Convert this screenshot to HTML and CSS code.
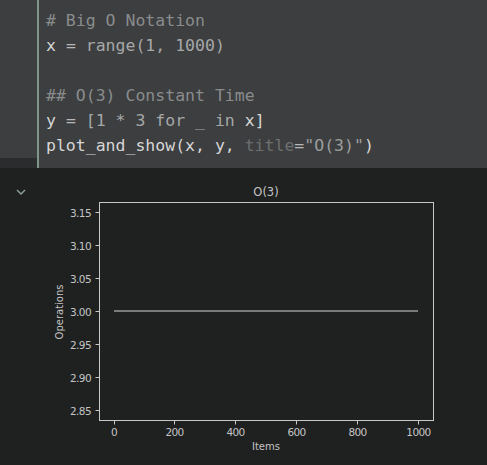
FILE: index.html
```html
<!DOCTYPE html>
<html>
<head>
<meta charset="utf-8">
<link rel="stylesheet" href="styles.css">
</head>
<body>
<div class="cell">
  <div class="gutter"><div class="gutter-top"></div></div>
  <pre class="code"><span class="cm"># Big O Notation</span>
<span class="id">x</span> <span class="op">=</span> <span class="kw">range(1, 1000)</span>

<span class="cm">## O(3) Constant Time</span>
<span class="id">y</span> <span class="op">=</span> <span class="kw">[1 * 3 for _ in</span> <span class="id">x]</span>
<span class="id">plot_and_show(x, y,</span> <span class="pm">title</span><span class="op">=</span><span class="st">"O(3)"</span><span class="id">)</span></pre>
</div>
<div class="output">
  <div class="toggle">
    <svg width="10" height="6" viewBox="0 0 10 6"><path d="M1 1 L5 5 L9 1" fill="none" stroke="#8fa39a" stroke-width="1.4"/></svg>
  </div>
  <svg class="plot" width="447" height="297" viewBox="0 0 447 297">
    <g transform="translate(-40,-168)" font-family="DejaVu Sans, sans-serif" font-size="10" fill="#c4c4c4">
      <text x="266" y="196" text-anchor="middle" font-size="11.5">O(3)</text>
      <rect x="99.5" y="202.5" width="334" height="218" fill="none" stroke="#c8c8c8" stroke-width="1"/>
      <line x1="114" y1="311" x2="418" y2="311" stroke="#777b7b" stroke-width="2"/>
      <g stroke="#c8c8c8" stroke-width="1">
        <line x1="95.5" y1="212.5" x2="99.5" y2="212.5"/>
        <line x1="95.5" y1="245.5" x2="99.5" y2="245.5"/>
        <line x1="95.5" y1="278.5" x2="99.5" y2="278.5"/>
        <line x1="95.5" y1="311.5" x2="99.5" y2="311.5"/>
        <line x1="95.5" y1="344.5" x2="99.5" y2="344.5"/>
        <line x1="95.5" y1="377.5" x2="99.5" y2="377.5"/>
        <line x1="95.5" y1="410.5" x2="99.5" y2="410.5"/>
        <line x1="114.5" y1="420.5" x2="114.5" y2="424.5"/>
        <line x1="174.5" y1="420.5" x2="174.5" y2="424.5"/>
        <line x1="235.5" y1="420.5" x2="235.5" y2="424.5"/>
        <line x1="296.5" y1="420.5" x2="296.5" y2="424.5"/>
        <line x1="357.5" y1="420.5" x2="357.5" y2="424.5"/>
        <line x1="418.5" y1="420.5" x2="418.5" y2="424.5"/>
      </g>
      <g text-anchor="end" letter-spacing="-0.6" font-size="10.5">
        <text x="91" y="216.5">3.15</text>
        <text x="91" y="249.5">3.10</text>
        <text x="91" y="282.5">3.05</text>
        <text x="91" y="315.5">3.00</text>
        <text x="91" y="348.5">2.95</text>
        <text x="91" y="381.5">2.90</text>
        <text x="91" y="414.5">2.85</text>
      </g>
      <g text-anchor="middle" letter-spacing="-0.6" font-size="10.5">
        <text x="114" y="436">0</text>
        <text x="174.5" y="436">200</text>
        <text x="235.5" y="436">400</text>
        <text x="296.5" y="436">600</text>
        <text x="357.5" y="436">800</text>
        <text x="418.5" y="436">1000</text>
      </g>
      <text x="266" y="450" text-anchor="middle">Items</text>
      <text x="0" y="0" text-anchor="middle" transform="translate(63,312) rotate(-90)">Operations</text>
    </g>
  </svg>
</div>
</body>
</html>
```
FILE: styles.css
```css
html, body {
  margin: 0;
  padding: 0;
  background: #1f2121;
  width: 487px;
  height: 465px;
  overflow: hidden;
}
.cell {
  display: flex;
  height: 168px;
  background: #2b2c2d;
}
.gutter {
  width: 37px;
  flex: none;
}
.gutter-top {
  height: 158px;
  background: #3c3e40;
}
.code {
  flex: 1;
  margin: 0;
  background: #3c3e40;
  border-left: 2px solid #7f978a;
  padding: 8px 0 0 7px;
  font-family: "DejaVu Sans Mono", monospace;
  font-size: 16.5px;
  line-height: 25px;
  color: #d2d2d2;
  white-space: pre;
}
.cm { color: #8a8c8c; }
.id { color: #d6d6d6; }
.op { color: #b8b8b8; }
.kw { color: #a6a8a8; }
.pm { color: #6d6f6f; }
.st { color: #9c9e9e; }
.output {
  display: flex;
  height: 297px;
}
.toggle {
  width: 40px;
  flex: none;
  display: flex;
  justify-content: center;
  align-items: flex-start;
  padding-top: 21px;
  box-sizing: border-box;
}
.toggle svg {
  display: block;
  margin-left: 1px;
}
.plot {
  display: block;
}
```
